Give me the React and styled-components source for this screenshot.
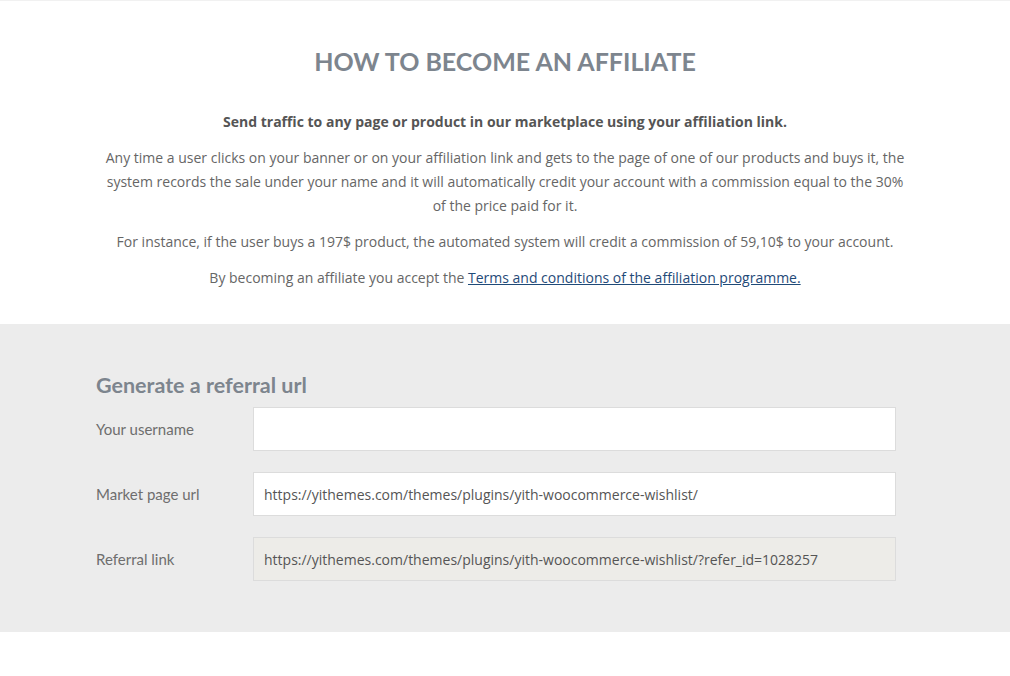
import React from 'react';
import styled, { createGlobalStyle } from 'styled-components';

const GlobalStyle = createGlobalStyle`
  html, body {
    margin: 0;
    padding: 0;
    background: #ffffff;
  }
  body {
    font-family: "Open Sans", "Liberation Sans", sans-serif;
    border-top: 1px solid #f1f1f1;
  }
  * { box-sizing: border-box; }
`;

const Intro = styled.section`
  width: 800px;
  margin: 0 auto;
  padding: 45px 0 22px;
  text-align: center;
  color: #666;
  font-size: 14px;
  line-height: 24px;

  h1 {
    margin: 0 0 34px;
    font-family: Lato, "Liberation Sans", sans-serif;
    font-weight: 700;
    font-size: 25px;
    line-height: 30px;
    color: #7d858e;
  }

  p {
    margin: 0 0 12px;
  }

  strong {
    font-weight: 700;
    color: #555;
  }

  a {
    color: #1f4a78;
    text-decoration: underline;
  }
`;

const FormSection = styled.section`
  background: #ececec;
  padding: 49px 18px 51px 0;
`;

const FormBox = styled.div`
  width: 800px;
  margin: 0 auto;

  h2 {
    margin: 0 0 10px;
    font-family: Lato, "Liberation Sans", sans-serif;
    font-weight: 700;
    font-size: 21.5px;
    line-height: 24px;
    color: #7d858e;
  }
`;

const Row = styled.div`
  display: flex;
  align-items: center;
  & + & { margin-top: 21px; }
`;

const Label = styled.label`
  width: 157px;
  flex-shrink: 0;
  font-family: Lato, "Liberation Sans", sans-serif;
  font-size: 15px;
  color: #6e6e6e;
`;

const Field = styled.div`
  width: 643px;
  height: 44px;
  display: flex;
  align-items: center;
  padding: 0 10px;
  background: ${({ $readonly }) => ($readonly ? '#edece8' : '#ffffff')};
  border: 1px solid #dcdcdc;
  font-size: 14px;
  color: #555;
  white-space: nowrap;
  overflow: hidden;
`;

export default function App() {
  return (
    <>
      <GlobalStyle />
      <Intro>
        <h1>HOW TO BECOME AN AFFILIATE</h1>
        <p><strong>Send traffic to any page or product in our marketplace using your affiliation link.</strong></p>
        <p>
          Any time a user clicks on your banner or on your affiliation link and gets to the page of one of our products and buys it, the system records the sale under your name and it will automatically credit your account with a commission equal to the 30% of the price paid for it.
        </p>
        <p>For instance, if the user buys a 197$ product, the automated system will credit a commission of 59,10$ to your account.</p>
        <p>
          By becoming an affiliate you accept the <a href="#">Terms and conditions of the affiliation programme.</a>
        </p>
      </Intro>
      <FormSection>
        <FormBox>
          <h2>Generate a referral url</h2>
          <Row>
            <Label>Your username</Label>
            <Field />
          </Row>
          <Row>
            <Label>Market page url</Label>
            <Field>https://yithemes.com/themes/plugins/yith-woocommerce-wishlist/</Field>
          </Row>
          <Row>
            <Label>Referral link</Label>
            <Field $readonly>https://yithemes.com/themes/plugins/yith-woocommerce-wishlist/?refer_id=1028257</Field>
          </Row>
        </FormBox>
      </FormSection>
    </>
  );
}
